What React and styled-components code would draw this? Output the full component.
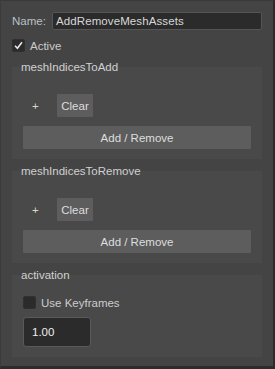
import styled, { createGlobalStyle } from "styled-components";

const GlobalStyle = createGlobalStyle`
  html, body {
    margin: 0;
    padding: 0;
    background: #444444;
  }
  body {
    font-family: "Liberation Sans", Arial, sans-serif;
    font-size: 11.5px;
    color: #cccccc;
  }
`;

const sections = [
  { id: "add", titulo: "meshIndicesToAdd" },
  { id: "remove", titulo: "meshIndicesToRemove" },
];

export default function App() {
  return (
    <>
      <GlobalStyle />
      <Janela>
        <NameRow>
          <NameLabel>Name:</NameLabel>
          <NameInput>AddRemoveMeshAssets</NameInput>
        </NameRow>
        <CheckRow>
          <CheckBox>
            <svg width="9" height="9" viewBox="0 0 9 9">
              <path d="M1 4.8 L3.4 7.3 L8 1.2" fill="none" stroke="#e6e6e6" strokeWidth="1.6" />
            </svg>
          </CheckBox>
          <span>Active</span>
        </CheckRow>

        {sections.map((sec, i) => (
          <Section key={sec.id} first={i === 0}>
            <Header>{sec.titulo}</Header>
            <Panel>
              <ListRow>
                <Plus>+</Plus>
                <SmallButton>Clear</SmallButton>
              </ListRow>
              <WideButton>Add / Remove</WideButton>
            </Panel>
          </Section>
        ))}

        <Section>
          <Header>activation</Header>
          <Panel activation>
            <CheckRow inner>
              <CheckBox />
              <span>Use Keyframes</span>
            </CheckRow>
            <ValueField>1.00</ValueField>
          </Panel>
        </Section>
      </Janela>
    </>
  );
}

const Janela = styled.div`
  box-sizing: border-box;
  width: 275px;
  height: 369px;
  padding: 12px 11px 0 11px;
  background: #444444;
  border-top: 1px solid #393939;
  border-left: 1px solid #3c3c3c;
  border-right: 2px solid #2c2c2c;
  border-bottom: 3px solid #2c2c2c;
`;

const NameRow = styled.div`
  display: flex;
  align-items: center;
  height: 18px;
  margin-top: -1px;
`;

const NameLabel = styled.span`
  width: 40px;
  color: #b9c0c6;
`;

const NameInput = styled.div`
  box-sizing: border-box;
  flex: 1;
  height: 18px;
  padding-left: 3px;
  line-height: 16px;
  background: #2b2b2b;
  border: 1px solid #555555;
  border-radius: 2px;
  color: #d8d8d8;
  letter-spacing: 0.1px;
`;

const CheckRow = styled.div`
  display: flex;
  align-items: center;
  gap: 5px;
  height: 13px;
  margin-top: ${(p) => (p.inner ? "0" : "9px")};
  color: #cccccc;
`;

const CheckBox = styled.div`
  box-sizing: border-box;
  width: 13px;
  height: 13px;
  display: flex;
  align-items: center;
  justify-content: center;
  background: #2b2b2b;
  border: 1px solid #303030;
  border-radius: 2px;
`;

const Section = styled.div`
  margin-top: ${(p) => (p.first ? "8px" : "5px")};
`;

const Header = styled.div`
  padding-left: 9px;
  height: 14px;
  line-height: 14px;
  color: #d0d0d0;
`;

const Panel = styled.div`
  box-sizing: border-box;
  margin-top: -7px;
  padding: ${(p) => (p.activation ? "21px 11px 10px" : "27px 11px 10px")};
  background: #494949;
  display: flex;
  flex-direction: column;
  gap: ${(p) => (p.activation ? "8px" : "9px")};
`;

const ListRow = styled.div`
  display: flex;
  align-items: center;
  height: 23px;
`;

const Plus = styled.span`
  width: 34px;
  padding-left: 9px;
  box-sizing: border-box;
  color: #e0d8c8;
`;

const SmallButton = styled.button`
  width: 36px;
  height: 23px;
  padding: 0;
  border: none;
  border-radius: 1px;
  background: #5d5d5d;
  color: #dddddd;
  font-family: inherit;
  font-size: inherit;
`;

const WideButton = styled.button`
  width: 100%;
  height: 23px;
  padding: 0;
  border: none;
  border-radius: 1px;
  background: #5d5d5d;
  color: #dddddd;
  font-family: inherit;
  font-size: inherit;
`;

const ValueField = styled.div`
  box-sizing: border-box;
  width: 68px;
  height: 30px;
  padding-left: 8px;
  line-height: 28px;
  background: #2b2b2b;
  border: 1px solid #5a5a5a;
  border-radius: 3px;
  color: #eeeeee;
`;
